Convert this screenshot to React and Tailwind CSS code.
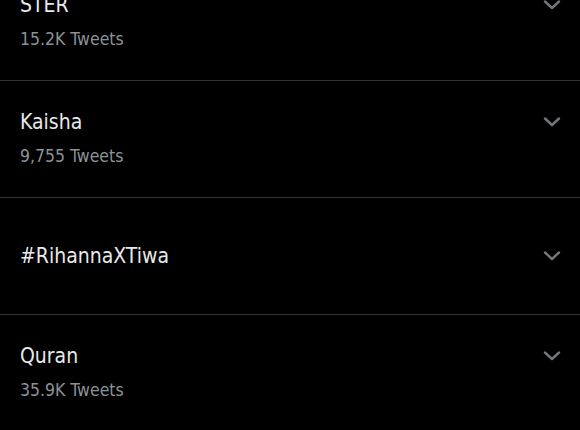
import React from "react";

const trends = [
  { title: "STER", count: "15.2K Tweets" },
  { title: "Kaisha", count: "9,755 Tweets" },
  { title: "#RihannaXTiwa", count: null },
  { title: "Quran", count: "35.9K Tweets" },
];

function Chevron() {
  return (
    <svg width="18" height="10" viewBox="0 0 18 10" className="shrink-0 mt-[12px]">
      <path d="M2 1.5 L9 8 L16 1.5" fill="none" stroke="#71767b" strokeWidth="2.4" strokeLinecap="round" strokeLinejoin="round" />
    </svg>
  );
}

export default function App() {
  return (
    <div
      className="w-[580px] h-[430px] overflow-hidden bg-black"
      style={{ fontFamily: '"DejaVu Sans Condensed", "Liberation Sans Narrow", sans-serif' }}
    >
      <div className="-mt-[36px]">
        {trends.map((t) => (
          <div key={t.title} className="h-[117px] border-b border-[#2f3336] flex items-center pl-5 pr-[19px]">
            <div className="flex-1 flex items-start justify-between">
              <div className="flex flex-col">
                <span className="text-[21px] leading-[34px] text-[#e7e9ea]">{t.title}</span>
                {t.count && (
                  <span className="text-[17.5px] leading-[34px] text-[#8b9298]">{t.count}</span>
                )}
              </div>
              <Chevron />
            </div>
          </div>
        ))}
      </div>
    </div>
  );
}
